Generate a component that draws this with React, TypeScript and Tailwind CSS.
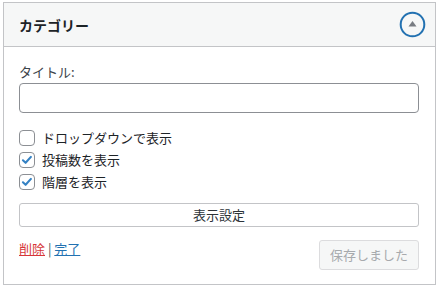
import React from "react";

const font = { fontFamily: '"Noto Sans CJK JP", "Noto Sans", sans-serif' };

type Option = { label: string; checked: boolean };

const options: Option[] = [
  { label: "ドロップダウンで表示", checked: false },
  { label: "投稿数を表示", checked: true },
  { label: "階層を表示", checked: true },
];

function CheckBox({ checked }: { checked: boolean }) {
  return (
    <span className="flex h-[16px] w-[16px] shrink-0 items-center justify-center rounded-[4px] border border-[#8c8f94] bg-white">
      {checked && (
        <svg width="14" height="14" viewBox="0 0 20 20">
          <path
            d="M4.2 10.4 L8 14 L15.6 5.6"
            fill="none"
            stroke="#3582c4"
            strokeWidth="3"
            strokeLinecap="round"
            strokeLinejoin="round"
          />
        </svg>
      )}
    </span>
  );
}

export default function App() {
  return (
    <div className="h-[289px] w-[438px] bg-white pl-[3px] pt-[2px]" style={font}>
      <section className="flex h-[283px] w-[433px] flex-col border border-[#c3c4c7] bg-white">
        {/* widget header */}
        <header className="flex h-[44px] items-center justify-between border-b border-[#c3c4c7] bg-[#f6f7f7] pl-[15px] pr-[9px]">
          <h3 className="text-[14px] font-bold leading-[20px] text-[#1d2327]">カテゴリー</h3>
          <svg width="27" height="27" viewBox="0 0 27 27">
            <circle cx="13.5" cy="13.5" r="11.8" fill="none" stroke="#2271b1" strokeWidth="2" />
            <path d="M13.5 10 L17.5 15.5 L9.5 15.5 Z" fill="#787c82" />
          </svg>
        </header>

        <div className="flex flex-col pl-[15px] pr-[16px] pt-[16px] text-[13px] text-[#1d2327]">
          <label className="leading-[18px] text-[#3c434a]">タイトル:</label>
          <div className="mt-[2px] h-[30px] w-full rounded-[4px] border border-[#8c8f94] bg-white" />

          <ul className="mt-[14px] flex flex-col">
            {options.map((o) => (
              <li key={o.label} className="flex h-[22px] items-center gap-[7px]">
                <CheckBox checked={o.checked} />
                <span className="leading-[18px]">{o.label}</span>
              </li>
            ))}
          </ul>

          <button
            type="button"
            className="mt-[10px] flex h-[24px] w-full items-center justify-center rounded-[3px] border border-[#c3c4c7] bg-white text-[13px] leading-[18px] text-[#2c3338]"
          >
            表示設定
          </button>

          <div className="mt-[13px] flex items-start justify-between">
            <div className="pt-[0px] leading-[18px]">
              <a className="text-[#d63638] underline">削除</a>
              <span className="text-[#50575e]"> | </span>
              <a className="text-[#2271b1] underline">完了</a>
            </div>
            <button
              type="button"
              className="flex h-[30px] w-[100px] items-center justify-center rounded-[3px] border border-[#dcdcde] bg-[#f6f7f7] text-[13px] text-[#a7aaad]"
            >
              保存しました
            </button>
          </div>
        </div>
      </section>
    </div>
  );
}
